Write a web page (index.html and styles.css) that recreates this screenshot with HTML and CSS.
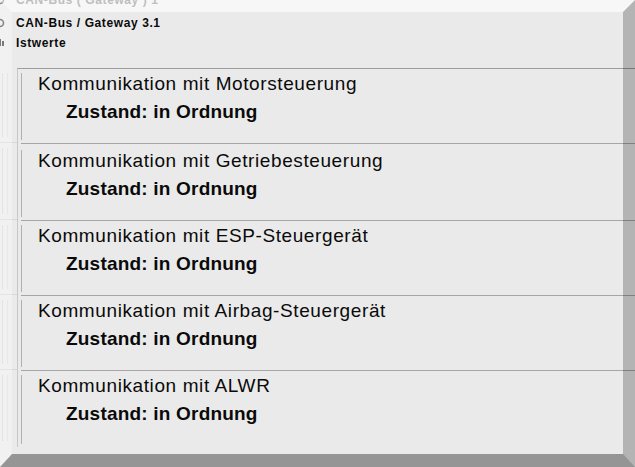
FILE: index.html
```html
<!DOCTYPE html>
<html lang="de">
<head>
<meta charset="utf-8">
<title>CAN-Bus / Gateway 3.1 – Istwerte</title>
<link rel="stylesheet" href="styles.css">
</head>
<body>
<div class="page">
  <div class="tree">
    <div class="node node-cut">
      <svg class="ico" width="10" height="10" viewBox="0 0 10 10"><circle cx="4" cy="5" r="3.5" fill="none" stroke="#555" stroke-width="1.6"/></svg>
      <span class="node-label">CAN-Bus ( Gateway ) 1</span>
    </div>
    <div class="node">
      <svg class="ico" width="10" height="10" viewBox="0 0 10 10"><circle cx="4" cy="5" r="3.5" fill="none" stroke="#444" stroke-width="1.6"/></svg>
      <span class="node-label">CAN-Bus / Gateway 3.1</span>
    </div>
    <div class="node">
      <svg class="ico" width="10" height="10" viewBox="0 0 10 10"><rect x="0" y="2" width="2" height="6" fill="#333"/><rect x="3" y="1" width="2" height="7" fill="#333"/><rect x="6" y="3" width="2" height="5" fill="#333"/></svg>
      <span class="node-label">Istwerte</span>
    </div>
  </div>

  <div class="body">
    <div class="gutter">
      <div class="g-row"><div class="g-line"></div></div>
      <div class="g-row"><div class="g-line"></div></div>
      <div class="g-row"><div class="g-line"></div></div>
      <div class="g-row"><div class="g-line"></div></div>
      <div class="g-row g-last"><div class="g-line"></div></div>
    </div>
    <div class="list">
      <div class="item">
        <div class="item-inner">
          <div class="title">Kommunikation mit Motorsteuerung</div>
          <div class="state">Zustand: in Ordnung</div>
        </div>
      </div>
      <div class="item item-tall">
        <div class="item-inner">
          <div class="title">Kommunikation mit Getriebesteuerung</div>
          <div class="state">Zustand: in Ordnung</div>
        </div>
      </div>
      <div class="item">
        <div class="item-inner">
          <div class="title">Kommunikation mit ESP-Steuergerät</div>
          <div class="state">Zustand: in Ordnung</div>
        </div>
      </div>
      <div class="item">
        <div class="item-inner">
          <div class="title">Kommunikation mit Airbag-Steuergerät</div>
          <div class="state">Zustand: in Ordnung</div>
        </div>
      </div>
      <div class="item item-last">
        <div class="item-inner">
          <div class="title">Kommunikation mit ALWR</div>
          <div class="state">Zustand: in Ordnung</div>
        </div>
      </div>
    </div>
  </div>

  <div class="bevel"></div>
</div>
</body>
</html>
```

FILE: styles.css
```css
html, body {
  margin: 0;
  padding: 0;
}
body {
  background: #eaeaea;
  font-family: "Liberation Sans", Arial, sans-serif;
  color: #0a0a0a;
  overflow: hidden;
}
.page {
  position: relative;
  width: 635px;
  height: 467px;
  overflow: hidden;
  display: flex;
  flex-direction: column;
}

/* tree header */
.tree {
  display: flex;
  flex-direction: column;
  margin-top: -14px;
}
.node {
  display: flex;
  align-items: center;
  height: 20px;
  font-size: 12px;
  font-weight: bold;
  letter-spacing: 0.6px;
}
.node-cut {
  height: 27px;
  color: #555;
}
.ico {
  margin-left: -4px;
  margin-right: 10px;
  flex: none;
}

/* body */
.body {
  display: flex;
  margin-top: 15px;
  flex: 1;
}
.gutter {
  width: 17px;
  flex: none;
  display: flex;
  flex-direction: column;
}
.g-row {
  height: 75px;
  box-sizing: border-box;
  border-bottom: 1px solid #d8d8d8;
  padding: 5px 0 5px 2px;
  display: flex;
}
.g-row:nth-child(2) {
  height: 77px;
}
.g-last {
  border-bottom: none;
  height: 76px;
}
.g-line {
  width: 4px;
  border-left: 1px solid #d4d4d4;
  border-right: 1px solid #dadada;
}

.list {
  flex: 1;
  border-top: 1px solid #9c9c9c;
  border-left: 1px solid #c8c8c8;
  display: flex;
  flex-direction: column;
  align-self: flex-start;
}
.item {
  height: 75px;
  box-sizing: border-box;
  margin-left: 3px;
  border-bottom: 1px solid #a6a6a6;
  padding: 4px 0 3px 0;
  display: flex;
}
.item-tall {
  height: 77px;
  padding-top: 6px;
}
.item-last {
  border-bottom: none;
  height: 76px;
}
.item-inner {
  flex: 1;
  border-left: 1px solid #b0b0b0;
  padding-left: 16px;
  display: flex;
  flex-direction: column;
}
.title {
  font-size: 19px;
  letter-spacing: 0.6px;
  line-height: 24px;
  margin-top: -1px;
}
.state {
  font-size: 19px;
  font-weight: bold;
  letter-spacing: 0.2px;
  line-height: 24px;
  margin-top: 4px;
  padding-left: 28px;
}

/* 3D screenshot frame drawn over the content */
.bevel {
  position: absolute;
  inset: 0;
  pointer-events: none;
  border-style: solid;
  border-width: 12px 12px 13px 12px;
  border-color: rgba(255, 255, 255, 0.62) rgba(0, 0, 0, 0.235) rgba(0, 0, 0, 0.36) rgba(255, 255, 255, 0.35);
}
```
